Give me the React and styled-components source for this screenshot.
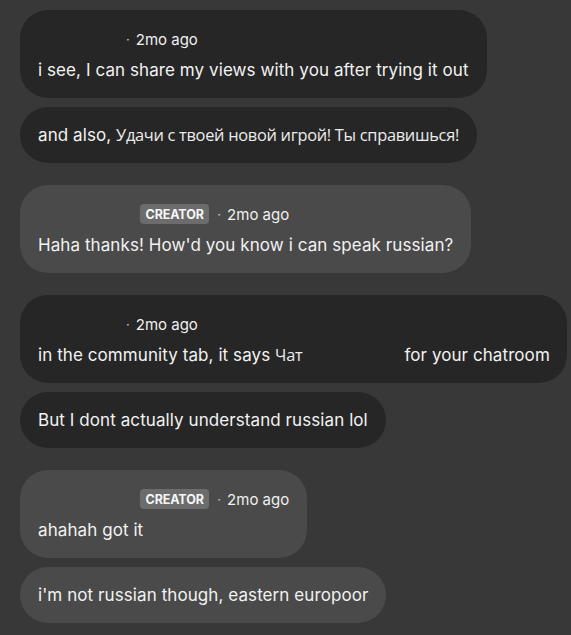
import React from "react";
import styled, { createGlobalStyle } from "styled-components";

const messages = [
  {
    group: 1,
    light: false,
    nameWidth: 80,
    time: "2mo ago",
    parts: [{ text: "i see, I can share my views with you after trying it out" }],
  },
  {
    group: 1,
    light: false,
    parts: [
      { text: "and also, " },
      { text: "Удачи с твоей новой игрой! Ты справишься!", ru: true },
    ],
  },
  {
    group: 2,
    light: true,
    nameWidth: 102,
    creator: true,
    time: "2mo ago",
    parts: [{ text: "Haha thanks! How'd you know i can speak russian?" }],
  },
  {
    group: 3,
    light: false,
    nameWidth: 80,
    time: "2mo ago",
    parts: [
      { text: "in the community tab, it says " },
      { text: "Чат", ru: true },
      { gap: 102 },
      { text: "for your chatroom" },
    ],
  },
  {
    group: 3,
    light: false,
    parts: [{ text: "But I dont actually understand russian lol" }],
  },
  {
    group: 4,
    light: true,
    nameWidth: 102,
    creator: true,
    time: "2mo ago",
    parts: [{ text: "ahahah got it" }],
  },
  {
    group: 4,
    light: true,
    parts: [{ text: "i'm not russian though, eastern europoor" }],
  },
];

function App() {
  return (
    <>
      <GlobalStyle />
      <Chat>
        {messages.map((m, i) => {
          const newGroup = i > 0 && messages[i - 1].group !== m.group;
          return (
            <Bubble key={i} light={m.light} newGroup={newGroup}>
              {m.time && (
                <Meta>
                  <Name style={{ width: m.nameWidth }} />
                  {m.creator && <Badge>Creator</Badge>}
                  <Dot>·</Dot>
                  <Time>{m.time}</Time>
                </Meta>
              )}
              <Text>
                {m.parts.map((p, j) =>
                  p.gap ? (
                    <Gap key={j} style={{ width: p.gap }} />
                  ) : p.ru ? (
                    <Russian key={j}>{p.text}</Russian>
                  ) : (
                    <span key={j}>{p.text}</span>
                  )
                )}
              </Text>
            </Bubble>
          );
        })}
      </Chat>
    </>
  );
}

const GlobalStyle = createGlobalStyle`
  html, body {
    margin: 0;
    background: #383838;
  }
  body {
    font-family: Inter, "Noto Sans", sans-serif;
    color: #f2f2f2;
    -webkit-font-smoothing: antialiased;
  }
`;

const Chat = styled.div`
  display: flex;
  flex-direction: column;
  align-items: flex-start;
  padding: 10px 4px 0 20px;
`;

const Bubble = styled.div`
  box-sizing: border-box;
  max-width: 547px;
  margin-top: ${(props) => (props.newGroup ? "13px" : "0")};
  margin-bottom: 9px;
  padding: 18px;
  border-radius: 28px;
  background: ${(props) => (props.light ? "#4a4a4a" : "#262626")};
`;

const Meta = styled.div`
  display: flex;
  align-items: center;
  height: 22px;
  margin-bottom: 10px;
  font-size: 15px;
  color: #f0f0f0;
`;

const Name = styled.span`
  display: inline-block;
  height: 20px;
`;

const Badge = styled.span`
  display: inline-flex;
  align-items: center;
  justify-content: center;
  height: 20px;
  padding: 0 5.5px;
  border-radius: 4px;
  background: #6c6c6c;
  color: #f6f6f6;
  font-size: 12.5px;
  font-weight: 700;
  letter-spacing: -0.1px;
  text-transform: uppercase;
`;

const Dot = styled.span`
  margin: 0 6px 0 8px;
  font-size: 13px;
  color: #cfcfcf;
`;

const Time = styled.span`
  font-size: 15px;
`;

const Text = styled.div`
  font-size: 17px;
  line-height: 20px;
  letter-spacing: 0.08px;
  white-space: nowrap;
`;

const Russian = styled.span`
  font-family: "Open Sans", "Noto Sans", sans-serif;
  font-size: 16.4px;
  font-weight: 400;
  letter-spacing: -0.3px;
  color: #ececec;
`;

const Gap = styled.span`
  display: inline-block;
`;

export default App;
